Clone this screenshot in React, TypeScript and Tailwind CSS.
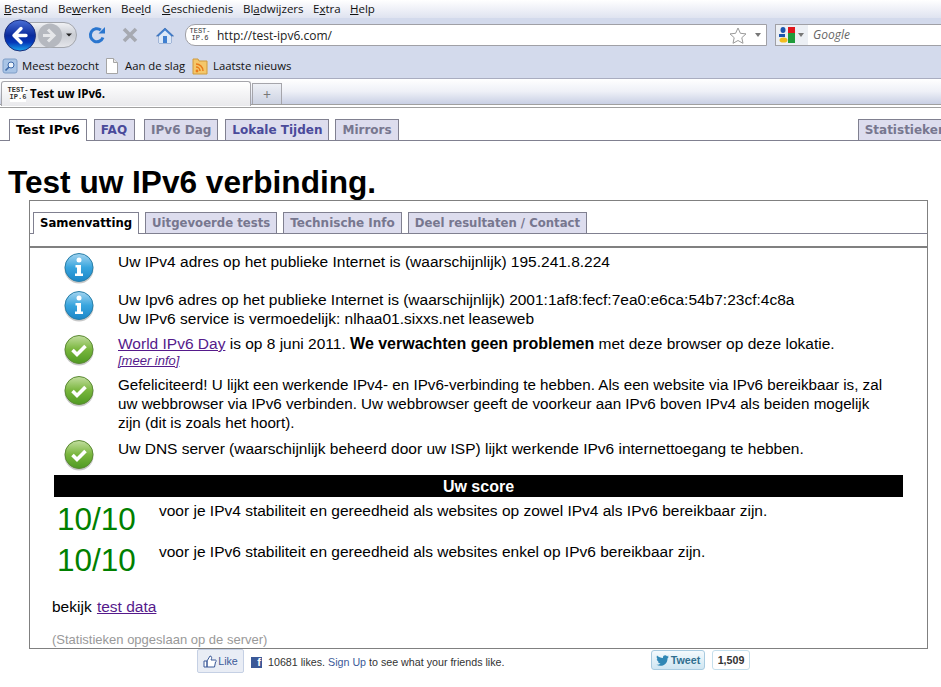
import React from "react";

const uiFont = "font-['Open_Sans','Noto_Sans',sans-serif]";

// --- Small favicon of the site ---
const SiteIcon = () => (
  <span className="flex h-[16px] w-[16px] shrink-0 flex-col items-center justify-center bg-white font-['Liberation_Mono',monospace] text-[7px] leading-[7px] text-[#333]">
    <span>TEST-</span>
    <span>IP.6</span>
  </span>
);

const Arrow = () => (
  <svg width="6" height="4" viewBox="0 0 6 4" className="shrink-0">
    <path d="M0 0h6L3 4z" fill="#777" />
  </svg>
);

const BackForward = () => (
  <div className="relative h-[34px] w-[78px] shrink-0">
    <div className="absolute left-[16px] top-[4px] h-[26px] w-[61px] rounded-r-[13px] border border-[#a3a6ad] bg-gradient-to-b from-[#f0f1f4] via-[#c9ccd3] to-[#e4e5ea]" />
    <svg width="78" height="34" viewBox="0 0 78 34" className="absolute left-0 top-0">
      <defs>
        <linearGradient id="backFill" x1="0" y1="0" x2="0" y2="1">
          <stop offset="0" stopColor="#4a6fd6" />
          <stop offset="0.5" stopColor="#0a2a9c" />
          <stop offset="0.72" stopColor="#0437b8" />
          <stop offset="1" stopColor="#1aa7ee" />
        </linearGradient>
      </defs>
      <circle cx="50" cy="17.500" r="12" fill="#b5b8bf" />
      <path d="M48 11.500l6 6-6 6M54 17.500H43" fill="none" stroke="#e6e7ea" strokeWidth="3" />
      <circle cx="20" cy="17.500" r="15.500" fill="url(#backFill)" stroke="#1c2f7c" />
      <path d="M21 10.500l-7 7 7 7M14 17.500h12" fill="none" stroke="#fff" strokeWidth="3.400" strokeLinecap="round" strokeLinejoin="round" />
      <path d="M66 15.500h6l-3 3z" fill="#222" />
    </svg>
  </div>
);

const ReloadIcon = () => (
  <svg width="18" height="18" viewBox="0 0 18 18" className="shrink-0">
    <path d="M15 11.500A6.500 6.500 0 1 1 12.800 4" fill="none" stroke="#2a76cf" strokeWidth="3" />
    <path d="M10.500 7.500h6.500V1z" fill="#2a76cf" />
  </svg>
);

const StopIcon = () => (
  <svg width="16" height="16" viewBox="0 0 16 16" className="shrink-0">
    <path d="M2 2l12 12M14 2L2 14" stroke="#a6a9b1" strokeWidth="3.600" />
  </svg>
);

const HomeIcon = () => (
  <svg width="18" height="17" viewBox="0 0 18 17" className="shrink-0">
    <path d="M9 1L0.500 9h2.500v7h12V9h2.500z" fill="#3f7fd0" stroke="#2b5fa8" strokeWidth="0.600" />
    <path d="M3 9l6-5.600L15 9v7H3z" fill="#dce8f7" />
    <rect x="7" y="9" width="4" height="7" fill="#3f7fd0" />
  </svg>
);

const StarIcon = () => (
  <svg width="18" height="17" viewBox="0 0 18 17" className="shrink-0">
    <path d="M9 1l2.400 5.300 5.600.6-4.200 3.800 1.200 5.600L9 13.500l-5 2.800 1.200-5.600L1 6.900l5.600-.6z" fill="#fff" stroke="#9a9a9a" />
  </svg>
);

const GoogleIcon = () => (
  <svg width="16" height="16" viewBox="0 0 16 16" className="shrink-0">
    <rect x="9" y="0" width="7" height="6" fill="#e0161c" />
    <ellipse cx="4" cy="3" rx="2.500" ry="3" fill="#1d55ad" />
    <rect x="0" y="7" width="6" height="3" fill="#1d55ad" />
    <path d="M9 6h7v10H9z" fill="#1f9b3a" />
    <ellipse cx="4.500" cy="13" rx="4" ry="2.600" fill="#f2bd1d" />
  </svg>
);

const BookmarkSearch = () => (
  <svg width="16" height="16" viewBox="0 0 16 16" className="shrink-0">
    <rect x="1" y="1" width="14" height="14" rx="2" fill="#a9c4e6" stroke="#7f9ec8" />
    <circle cx="9" cy="7" r="3" fill="#eef4fb" stroke="#3d68a8" />
    <path d="M7 9l-3.500 3.500" stroke="#3d68a8" strokeWidth="1.600" />
  </svg>
);

const PageIcon = () => (
  <svg width="14" height="16" viewBox="0 0 14 16" className="shrink-0">
    <path d="M1.500.5h7l4 4v11h-11z" fill="#fff" stroke="#a5a5a5" />
    <path d="M8.500.5v4h4" fill="#e8e8e8" stroke="#a5a5a5" />
  </svg>
);

const RssIcon = () => (
  <svg width="16" height="17" viewBox="0 0 16 17" className="shrink-0">
    <path d="M1 1h5l1 2h8v13H1z" fill="#f4c76a" stroke="#cf9a3c" />
    <circle cx="5" cy="13" r="1.400" fill="#e9791a" />
    <path d="M4 9a4 4 0 0 1 4 4M4 6a7 7 0 0 1 7 7" fill="none" stroke="#e9791a" strokeWidth="1.500" />
  </svg>
);

const StatusIcon = ({ kind }: { kind: "info" | "ok" }) => {
  const id = kind === "info" ? "infoFill" : "okFill";
  return (
    <svg width="32" height="32" viewBox="0 0 32 32" className="shrink-0">
      <defs>
        <linearGradient id={id} x1="0" y1="0" x2="0" y2="1">
          {kind === "info" ? (
            <>
              <stop offset="0" stopColor="#a5d5f0" />
              <stop offset="0.5" stopColor="#38a5de" />
              <stop offset="1" stopColor="#1b86c8" />
            </>
          ) : (
            <>
              <stop offset="0" stopColor="#c3dea0" />
              <stop offset="0.5" stopColor="#79b63d" />
              <stop offset="1" stopColor="#4f9a22" />
            </>
          )}
        </linearGradient>
      </defs>
      <ellipse cx="16" cy="17" rx="14.500" ry="14.500" fill="#9a9a9a" opacity="0.55" />
      <circle cx="16" cy="15.500" r="14" fill={`url(#${id})`} stroke={kind === "info" ? "#2a7fa8" : "#5c8a35"} />
      {kind === "info" ? (
        <>
          <circle cx="16" cy="8" r="2.500" fill="#fff" />
          <path d="M12.500 13h5.500v8.500h2v2.500h-8v-2.500h2v-6h-1.500z" fill="#fff" />
        </>
      ) : (
        <path d="M9.500 16l4.500 4.500 8.500-8.500" fill="none" stroke="#fff" strokeWidth="3.600" />
      )}
    </svg>
  );
};

const tabBase =
  "shrink-0 border border-[#808090] px-[6px] font-['DejaVu_Sans',sans-serif] font-bold leading-[20px]";
const activeTab = `${tabBase} relative h-[22px] border-b-0 bg-white text-black`;
const linkTab = `${tabBase} h-[21px] border-b-0 bg-[#ddddee] text-[#4a4a9a]`;
const greyTab = `${tabBase} h-[21px] border-b-0 bg-[#ddddee] text-[#77778f]`;

const ResultRow = ({
  kind,
  height,
  children,
}: {
  kind: "info" | "ok";
  height: string;
  children: React.ReactNode;
}) => (
  <div className={`flex ${height}`}>
    <div className="w-[88px] shrink-0 pl-[33px]">
      <StatusIcon kind={kind} />
    </div>
    <div className="w-[778px] leading-[19px]">{children}</div>
  </div>
);

const ScoreRow = ({ children, height }: { children: React.ReactNode; height: string }) => (
  <div className={`flex ${height}`}>
    <div className="w-[105px] shrink-0 pl-[3px] pt-[4px] text-[31.5px] leading-[37px] text-[#008000]">10/10</div>
    <div className="pt-[4px] leading-[19px]">{children}</div>
  </div>
);

export default function App() {
  return (
    <div className="h-[687px] w-[941px] overflow-hidden bg-white font-['Liberation_Sans',Arial,sans-serif] text-[15.5px] text-black">
      {/* Browser chrome */}
      <div className={`${uiFont} bg-[#d3daec] text-[11.5px] text-[#111]`}>
        <div className="flex h-[18px] items-center bg-gradient-to-b from-white to-[#dfe3f0] pl-[4px] leading-[18px]">
          <span className="w-[54px]"><u>B</u>estand</span>
          <span className="w-[63px]">Be<u>w</u>erken</span>
          <span className="w-[41px]">Bee<u>l</u>d</span>
          <span className="w-[81px]"><u>G</u>eschiedenis</span>
          <span className="w-[70px]">Bl<u>a</u>dwijzers</span>
          <span className="w-[37px]">E<u>x</u>tra</span>
          <span><u>H</u>elp</span>
        </div>
        <div className="flex h-[34px] items-center">
          <BackForward />
          <div className="ml-[10px] flex w-[86px] items-center">
            <ReloadIcon />
            <span className="ml-[16px]"><StopIcon /></span>
            <span className="ml-[18px]"><HomeIcon /></span>
          </div>
          <div className="ml-[11px] flex h-[22px] w-[582px] items-center rounded-l-[10px] border border-[#a0a0a6] bg-white pr-[5px]">
            <span className="ml-[6px] mr-[9px]"><SiteIcon /></span>
            <span className="flex-1 pt-[1px] text-[12px] text-[#222]">http://test-ipv6.com/</span>
            <StarIcon />
            <span className="ml-[8px]"><Arrow /></span>
          </div>
          <div className="ml-[8px] flex h-[22px] flex-1 items-center border border-r-0 border-[#a0a0a6] bg-white">
            <div className="flex h-full w-[32px] items-center gap-[3px] bg-[#eceff4] pl-[3px]">
              <GoogleIcon />
              <Arrow />
            </div>
            <span className="ml-[5px] text-[12px] italic text-[#666]">Google</span>
          </div>
        </div>
        <div className="flex h-[26px] items-center pl-[2px] pt-[2px] text-[11.3px]">
          <BookmarkSearch />
          <span className="ml-[4px] w-[83px]">Meest bezocht</span>
          <PageIcon />
          <span className="ml-[6px] w-[67px]">Aan de slag</span>
          <RssIcon />
          <span className="ml-[5px]">Laatste nieuws</span>
        </div>
        <div className="flex h-[26px] items-start border-t border-[#a9adc0] bg-gradient-to-b from-white via-[#eef0f7] to-[#c9d0e4] pl-[1px]">
          <div className="relative z-10 mt-[2px] flex h-[25px] w-[250px] shrink-0 items-center gap-[4px] rounded-t-[3px] border border-b-0 border-[#a5a5ab] bg-gradient-to-b from-white to-[#e9e9ec] pl-[8px] font-bold text-black">
            <SiteIcon />
            Test uw IPv6.
          </div>
          <div className="ml-[1px] mt-[4px] flex h-[21px] w-[30px] shrink-0 items-center justify-center border border-b-0 border-[#a5a5ab] bg-gradient-to-b from-[#eef0f6] to-[#ccd2e2] text-[14px] text-[#777]">
            +
          </div>
        </div>
        <div className="h-[4px] border-y border-[#a0a0a0] bg-white" />
      </div>

      {/* Site navigation */}
      <div className="mt-[11px] flex h-[22px] items-start border-b border-[#808090] pl-[9px] text-[12px]">
        <span className={`${activeTab} text-[12.500px]`}>Test IPv6</span>
        <span className={`${linkTab} ml-[7px] pr-[7px]`}>FAQ</span>
        <span className={`${greyTab} ml-[9px]`}>IPv6 Dag</span>
        <span className={`${linkTab} ml-[7px]`}>Lokale Tijden</span>
        <span className={`${greyTab} ml-[6px]`}>Mirrors</span>
        <span className={`${greyTab} ml-[459px]`}>Statistieken</span>
      </div>

      <h1 className="mt-[23px] pl-[8px] text-[31.600px] font-bold leading-[36px]">Test uw IPv6 verbinding.</h1>

      {/* Result frame */}
      <div className="ml-[29px] h-[449px] w-[899px] border border-[#808080]">
        <div className="mt-[11px] flex h-[22px] items-start gap-[6px] border-b border-[#808090] pl-[3px] text-[11.700px]">
          <span className={activeTab}>Samenvatting</span>
          <span className={greyTab}>Uitgevoerde tests</span>
          <span className={`${greyTab} text-[12px]`}>Technische Info</span>
          <span className={greyTab}>Deel resultaten / Contact</span>
        </div>
        <div className="mt-[12px] h-[2px] bg-[#808080]" />
        <div className="mt-[4px]">
          <ResultRow kind="info" height="h-[38px]">
            Uw IPv4 adres op het publieke Internet is (waarschijnlijk) 195.241.8.224
          </ResultRow>
          <ResultRow kind="info" height="h-[44px]">
            Uw Ipv6 adres op het publieke Internet is (waarschijnlijk) 2001:1af8:fecf:7ea0:e6ca:54b7:23cf:4c8a
            <br />
            Uw IPv6 service is vermoedelijk: nlhaa01.sixxs.net leaseweb
          </ResultRow>
          <ResultRow kind="ok" height="h-[41px]">
            <a className="text-[#551a8b] underline">World IPv6 Day</a> is op 8 juni 2011.{" "}
            <b className="text-[16px]">We verwachten geen problemen</b> met deze browser op deze lokatie.
            <div className="text-[13px] italic leading-[16px]">
              <a className="text-[#551a8b] underline">[meer info]</a>
            </div>
          </ResultRow>
          <ResultRow kind="ok" height="h-[64px]">
            <span className="text-[15.2px]">
              Gefeliciteerd! U lijkt een werkende IPv4- en IPv6-verbinding te hebben. Als een website via IPv6 bereikbaar is, zal uw webbrowser via IPv6 verbinden. Uw webbrowser geeft de voorkeur aan IPv6 boven IPv4 als beiden mogelijk zijn (dit is zoals het hoort).
            </span>
          </ResultRow>
          <ResultRow kind="ok" height="h-[36px]">
            Uw DNS server (waarschijnlijk beheerd door uw ISP) lijkt werkende IPv6 internettoegang te hebben.
          </ResultRow>
        </div>
        <div className="ml-[24px] w-[849px]">
          <div className="h-[22px] bg-black text-center text-[16px] font-bold leading-[23px] text-white">Uw score</div>
          <ScoreRow height="h-[41px]">voor je IPv4 stabiliteit en gereedheid als websites op zowel IPv4 als IPv6 bereikbaar zijn.</ScoreRow>
          <ScoreRow height="h-[41px]">voor je IPv6 stabiliteit en gereedheid als websites enkel op IPv6 bereikbaar zijn.</ScoreRow>
        </div>
        <div className="ml-[22px] mt-[18px] leading-[19px]">
          bekijk <a className="ml-[1px] text-[#551a8b] underline">test data</a>
        </div>
        <div className="ml-[22px] mt-[16px] text-[13px] leading-[15px] text-[#999]">(Statistieken opgeslaan op de server)</div>
      </div>

      {/* Social footer */}
      <div className="flex h-[24px] items-start text-[10.700px] text-[#333]">
        <div className="ml-[197px] flex h-[24px] w-[47px] shrink-0 items-center justify-center gap-[1px] rounded-[2px] border border-[#c5d0e4] bg-[#e9edf5] text-[#3b5998]">
          <svg width="14" height="13" viewBox="0 0 14 13">
            <path d="M1 6h3v6H1zM4 6l3-5c2 0 2 2 1 4h4.500c1 0 1 2 0 2l-1 5H4z" fill="#fff" stroke="#3b5998" />
          </svg>
          Like
        </div>
        <div className="ml-[7px] mt-[5px] flex w-[254px] shrink-0 items-center">
          <span className="flex h-[11px] w-[11px] items-end justify-end bg-[#3b5998] pr-[1px] text-[11px] font-bold leading-[11px] text-white">f</span>
          <span className="ml-[6px]">10681 likes. <span className="text-[#3b5998]">Sign Up</span> to see what your friends like.</span>
        </div>
        <div className="ml-[146px] mt-[1px] flex h-[20px] w-[54px] shrink-0 items-center justify-center gap-[2px] rounded-[3px] border border-[#a8cbe0] bg-gradient-to-b from-[#f4fafd] to-[#cfe6f2] font-bold text-[#2f6f90]">
          <svg width="13" height="11" viewBox="0 0 13 11">
            <path d="M13 1.500l-1.500.5 1-1.500-1.500.7C9.500-.500 6.500.500 7 3 4.500 3 2.500 2 1 .5.300 2 .800 3.500 2 4.300L.8 4c0 1.500 1 2.500 2.300 2.800H2c.3 1 1.300 1.700 2.500 1.700C3.500 9.500 2 10 .5 9.800 5 12.500 11.500 10 11.500 3.500z" fill="#2f87b5" />
          </svg>
          Tweet
        </div>
        <div className="ml-[7px] mt-[1px] flex h-[20px] w-[38px] shrink-0 items-center justify-center rounded-[3px] border border-[#c5dfec] bg-white font-bold text-[#333]">1,509</div>
      </div>
    </div>
  );
}
